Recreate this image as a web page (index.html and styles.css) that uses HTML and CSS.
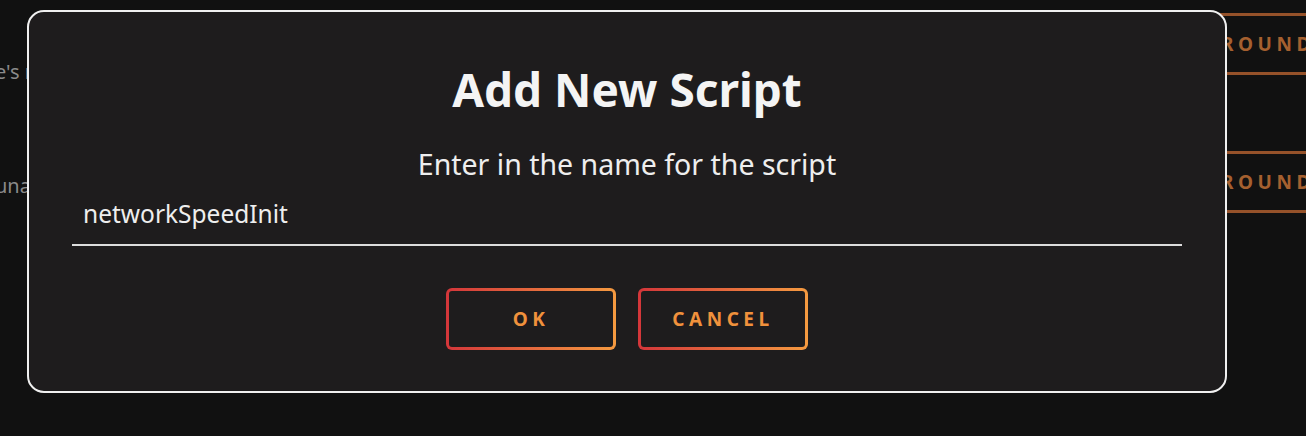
FILE: index.html
```html
<!DOCTYPE html>
<html lang="en">
<head>
  <meta charset="UTF-8" />
  <title>Scripts - Add New Script</title>
  <link rel="stylesheet" href="styles.css">
</head>
<body>

  <div class="page">
    <div class="notes">
      <p class="note">e's network speed</p>
      <p class="note">unassigned</p>
    </div>
    <div class="actions">
      <button class="ghost-btn" type="button">BACKGROUND</button>
      <button class="ghost-btn" type="button">BACKGROUND</button>
    </div>
  </div>

  <div class="dialog" role="dialog">
    <h2 class="dialog-title">Add New Script</h2>
    <p class="dialog-text">Enter in the name for the script</p>
    <input class="dialog-input" name="scriptName" value="networkSpeedInit" />
    <div class="dialog-buttons">
      <button class="grad-btn" type="button">OK</button>
      <button class="grad-btn" type="button">CANCEL</button>
    </div>
  </div>

</body>
</html>
```

FILE: styles.css
```css
html, body {
  margin: 0;
  height: 100%;
  overflow: hidden;
}

body {
  font-family: 'Noto Sans', 'Open Sans', sans-serif;
  background: #111111;
  color: #f2f2f2;
}

.page {
  display: flex;
}

.notes {
  width: 1110px;
  flex-shrink: 0;
  padding-top: 58px;
}

.note {
  margin: 0 0 86px -5px;
  font-size: 20px;
  line-height: 28px;
  color: #8a8a8a;
  white-space: nowrap;
}

.actions {
  width: 260px;
  flex-shrink: 0;
  padding-top: 13px;
  display: flex;
  flex-direction: column;
  gap: 76px;
}

.ghost-btn {
  height: 62px;
  padding: 0 0 0 22px;
  text-align: left;
  background: none;
  border: 3px solid #96522a;
  border-radius: 5px;
  color: #a5602f;
  font-family: inherit;
  font-size: 19px;
  font-weight: bold;
  letter-spacing: 4.5px;
}

.dialog {
  position: absolute;
  top: 10px;
  left: 27px;
  padding: 0 43px;
  box-sizing: border-box;
  width: 1200px;
  height: 383px;
  background: #1e1c1d;
  border: 2px solid #f0f0f0;
  border-radius: 17px;
  display: flex;
  flex-direction: column;
}

.dialog-title {
  margin: 49px 0 0;
  font-size: 46px;
  line-height: 56px;
  text-align: center;
  color: #f4f4f4;
}

.dialog-text {
  margin: 29px 0 0;
  font-size: 28.5px;
  line-height: 36px;
  text-align: center;
  color: #eeeeee;
}

.dialog-input {
  margin-top: 16px;
  padding: 0 11px 14px;
  font-family: inherit;
  font-size: 24.5px;
  line-height: 32px;
  color: #eeeeee;
  background: none;
  border: none;
  border-bottom: 2px solid #dddddd;
  outline: none;
}

.dialog-buttons {
  margin-top: 42px;
  display: flex;
  justify-content: center;
  gap: 22px;
}

.grad-btn {
  width: 170px;
  height: 62px;
  border: 3px solid transparent;
  border-radius: 6px;
  background:
    linear-gradient(#1e1c1d, #1e1c1d) padding-box,
    linear-gradient(90deg, #d4363a, #f59a40) border-box;
  color: #f0913c;
  font-family: inherit;
  font-size: 19px;
  font-weight: bold;
  letter-spacing: 4.5px;
  cursor: pointer;
}
```
